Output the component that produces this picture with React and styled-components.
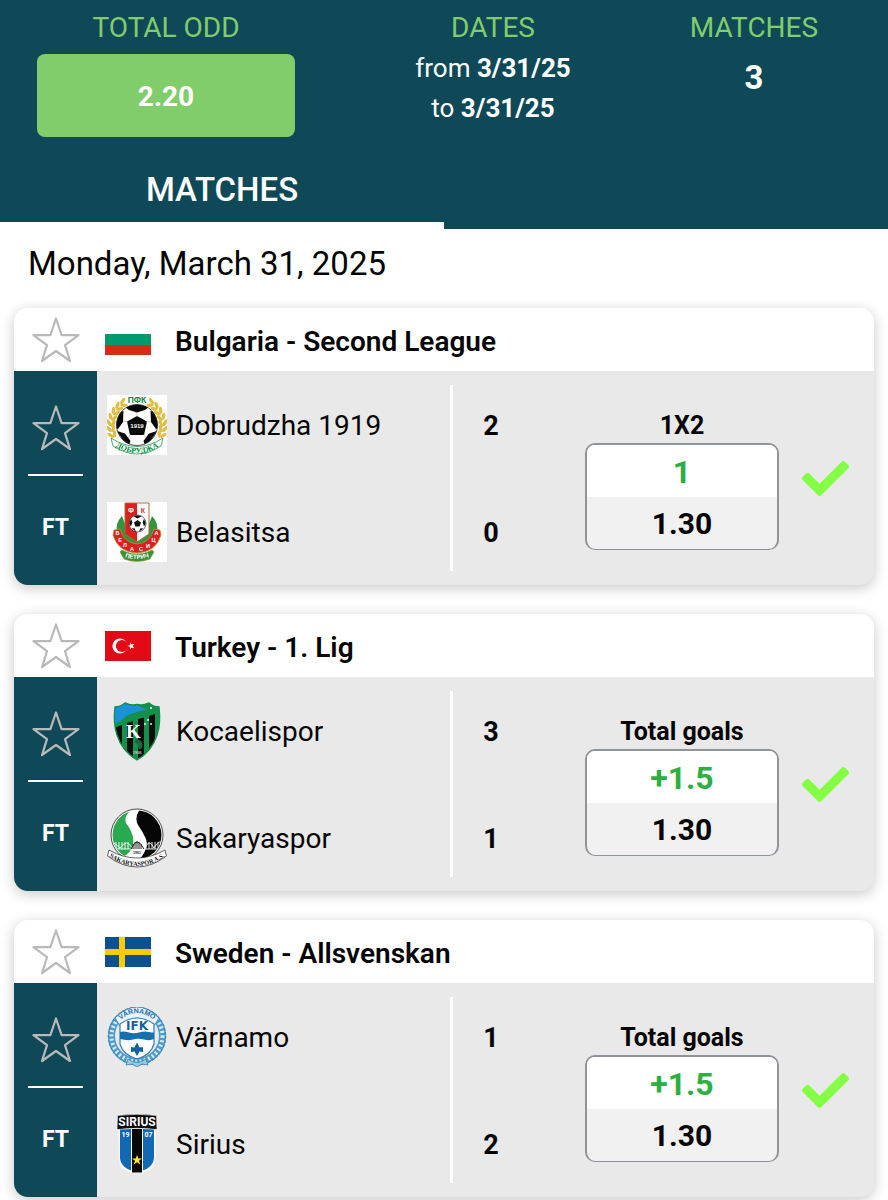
import React from "react";
import styled, { createGlobalStyle } from "styled-components";
import { FaCheck } from "react-icons/fa";

const teal = "#0f4957";
const lime = "#81cc6b";

const GlobalStyle = createGlobalStyle`
  *, *::before, *::after { box-sizing: border-box; }
  body {
    margin: 0;
    background: #fff;
    color: #050505;
    font-family: Roboto, "Liberation Sans", sans-serif;
  }
  button { font: inherit; color: inherit; border: 0; padding: 0; background: none; cursor: pointer; }
  h1, h2, h3, p, dl, dd { margin: 0; font-weight: 400; }
`;

/* ---------- header ---------- */

const Header = styled.header`
  background: ${teal};
  color: #fff;
`;

const Summary = styled.dl`
  display: grid;
  grid-template-columns: 332fr 322fr 200fr;
  padding: 10px 34px 0 0;
  min-height: 150px;
  text-align: center;
`;

const SummaryLabel = styled.dt`
  color: ${lime};
  font-size: 28px;
  line-height: 36px;
`;

const TotalOdd = styled.dd`
  height: 83px;
  margin: 8px 37px 0;
  border-radius: 8px;
  background: ${lime};
  font-size: 28px;
  line-height: 86px;
  font-weight: 700;
`;

const Dates = styled.div`
  padding-top: 2px;
`;

const DateLine = styled.dd`
  font-size: 26px;
  line-height: 40px;

  strong { font-weight: 700; }
`;

const MatchCount = styled.dd`
  padding-top: 12px;
  font-size: 33px;
  line-height: 40px;
  font-weight: 700;
`;

const Tabs = styled.nav`
  display: flex;
`;

const Tab = styled.button`
  flex: 1;
  height: 79px;
  padding-top: 8px;
  border-bottom: 7px solid ${(p) => (p.$active ? "#fff" : "transparent")};
  font-size: 33px;
  font-weight: 500;
  line-height: 40px;
`;

/* ---------- match list ---------- */

const Main = styled.main`
  padding: 15px 14px 28px;
`;

const DayTitle = styled.h1`
  padding: 0 14px;
  font-size: 33px;
  line-height: 40px;
`;

const CardList = styled.div`
  display: flex;
  flex-direction: column;
  gap: 29px;
  margin-top: 24px;
`;

const Card = styled.article`
  border-radius: 14px;
  overflow: hidden;
  background: #e9e9e9;
  box-shadow: 0 3px 14px rgba(0, 0, 0, 0.22);
`;

const LeagueBar = styled.header`
  display: flex;
  align-items: center;
  height: 63px;
  padding-top: 1px;
  background: #fff;
`;

const StarButton = styled.button`
  display: flex;
  justify-content: center;
  width: 83px;
  color: #b9b9b9;
`;

const FlagBox = styled.div`
  display: flex;
  width: 78px;
  padding-left: 8px;
`;

const LeagueName = styled.h2`
  font-size: 28px;
  line-height: 36px;
  font-weight: 600;
  padding-top: 4px;
`;

const MatchBody = styled.div`
  display: grid;
  grid-template-columns: 83px 353fr 3px 76px 345fr;
`;

const StatusColumn = styled.div`
  display: flex;
  flex-direction: column;
  align-items: center;
  padding-top: 33px;
  background: ${teal};
  color: #fff;
`;

const StatusRule = styled.hr`
  width: 55px;
  height: 2px;
  margin: 22px 0 36px;
  border: 0;
  background: #fff;
`;

const Status = styled.span`
  font-size: 23px;
  line-height: 32px;
  font-weight: 700;
`;

const Rows = styled.div`
  display: flex;
  flex-direction: column;
`;

const TeamRow = styled.div`
  display: flex;
  align-items: center;
  gap: 9px;
  height: 107px;
  padding-left: 10px;
`;

const TeamName = styled.h3`
  padding-top: 2px;
  font-size: 28px;
  line-height: 36px;
`;

const Divider = styled.div`
  margin: 14px 0;
  background: #fff;
`;

const Score = styled.span`
  height: 107px;
  line-height: 110px;
  text-align: center;
  font-size: 27px;
  font-weight: 700;
`;

const BetColumn = styled.div`
  display: flex;
  align-items: center;
  gap: 23px;
  padding: 0 25px 0 56px;
`;

const Market = styled.div`
  flex: 1;
  padding-top: 4px;
  text-align: center;
`;

const MarketName = styled.p`
  margin-bottom: 2px;
  font-size: 25px;
  line-height: 30px;
  font-weight: 700;
`;

const OddsBox = styled.div`
  border: 2px solid #8f949b;
  border-bottom-width: 1px;
  border-radius: 10px;
  overflow: hidden;
  background: #f1f1f2;
`;

const Pick = styled.p`
  padding-top: 2px;
  background: #fff;
  color: #2eae43;
  font-size: 32px;
  line-height: 50px;
  font-weight: 700;
`;

const Odd = styled.p`
  padding-top: 2px;
  font-size: 30px;
  line-height: 50px;
  font-weight: 700;
`;

const WonMark = styled(FaCheck)`
  width: 47px;
  height: 47px;
  color: #84ff45;
`;

/* ---------- drawings ---------- */

function Star() {
  return (
    <svg width="48" height="48" viewBox="0 0 48 48" fill="none" stroke="currentColor" strokeWidth="2.2" strokeLinejoin="round" aria-hidden="true">
      <path d="M24 2.5 L29.6 19.2 H46.5 L33 29.2 L38 45 L24 35 L10 45 L15 29.2 L1.5 19.2 H18.4 Z" />
    </svg>
  );
}

function BulgariaFlag() {
  return (
    <svg width="46" height="30" viewBox="0 0 46 30" role="img" aria-label="Bulgaria">
      <rect width="46" height="30" fill="#fff" />
      <rect y="4" width="46" height="11" fill="#fff" />
      <rect y="9" width="46" height="11" fill="#009a6e" />
      <rect y="20" width="46" height="10" fill="#d62b16" />
    </svg>
  );
}

function TurkeyFlag() {
  return (
    <svg width="46" height="30" viewBox="0 0 46 30" role="img" aria-label="Turkey">
      <rect width="46" height="30" fill="#e30a17" />
      <circle cx="15" cy="15" r="7.6" fill="#fff" />
      <circle cx="17" cy="15" r="6.1" fill="#e30a17" />
      <path d="M22.4 15 L25 14.2 L25 11.4 L26.6 13.6 L29.4 12.8 L27.7 15 L29.4 17.2 L26.6 16.4 L25 18.6 L25 15.8 Z" fill="#fff" />
    </svg>
  );
}

function SwedenFlag() {
  return (
    <svg width="46" height="30" viewBox="0 0 46 30" role="img" aria-label="Sweden">
      <rect width="46" height="30" fill="#0b5190" />
      <path d="M14 0 h6 v12 h26 v6 h-26 v12 h-6 v-12 h-14 v-6 h14 z" fill="#fecb00" />
    </svg>
  );
}

const Crest = styled.svg.attrs({ width: 60, height: 60, viewBox: "0 0 60 60", role: "img" })`
  flex: none;
  font-family: "Liberation Serif", serif;
  font-weight: 700;
  text-anchor: middle;
`;

function DobrudzhaCrest() {
  const branch = [
    [4.5, 39, -30],
    [3.2, 33, -15],
    [3.4, 27, 0],
    [5, 21, 15],
    [8, 15.5, 32],
    [12, 10.8, 48],
    [17, 7, 62],
  ].map(([x, y, turn]) => (
    <g key={y} transform={`translate(${x} ${y}) rotate(${turn})`}>
      <ellipse cx="-1.6" cy="0" rx="1.7" ry="3.7" transform="rotate(-28)" />
      <ellipse cx="3.2" cy="0" rx="1.7" ry="3.7" transform="rotate(28)" />
    </g>
  ));
  return (
    <Crest aria-label="Dobrudzha 1919">
      <defs>
        <path id="dob-arc" d="M5 49.5 Q30 67 55 49.5" />
        <clipPath id="dob-ball"><circle cx="30" cy="30" r="20.5" /></clipPath>
      </defs>
      <rect width="60" height="60" fill="#fff" />
      <g fill="#e0bd45">{branch}</g>
      <g fill="#e0bd45" transform="translate(60 0) scale(-1 1)">{branch}</g>
      <circle cx="30" cy="30" r="20.5" fill="#fff" stroke="#222" strokeWidth="0.8" />
      <g clipPath="url(#dob-ball)" fill="#080808">
        <path d="M30 21 L40 26.5 L37 40 H23 L20 26.5 Z" />
        <path d="M18 12 Q30 7 42 12 L38 15 L30 17.5 L22 15 Z" />
        <path d="M8 33 L9 18 L16.5 16 L16 27 L11 34 Z" />
        <path d="M52 33 L51 18 L43.5 16 L44 27 L49 34 Z" />
        <path d="M10 36 L18 38.5 L23.5 46 L21 53 Z" />
        <path d="M50 36 L42 38.5 L36.5 46 L39 53 Z" />
        <path d="M30 22 V17 M39 27 L44 26 M36.5 39 L39 43 M23.5 39 L21 43 M21 27 L16 26" stroke="#999" strokeWidth="0.5" />
      </g>
      <text x="30" y="33" fontSize="6" fill="#fff" fontFamily="Liberation Sans">1919</text>
      <text x="30" y="7.6" fontSize="8.5" fill="#0b8a43" fontFamily="Liberation Sans">ПФК</text>
      <path d="M4 43 Q30 60 56 43 L54 51 Q30 67 6 51 Z" fill="#fff" stroke="#35a365" strokeWidth="0.9" />
      <text fontSize="8" fill="#0b8a43"><textPath href="#dob-arc" startOffset="50%">ДОБРУДЖА</textPath></text>
    </Crest>
  );
}

function BelasitsaCrest() {
  return (
    <Crest aria-label="Belasitsa">
      <defs><path id="bel-foot" d="M16 54.5 Q30 59.5 44 54.5" /></defs>
      <rect width="60" height="60" fill="#fff" />
      <path d="M15 14 Q8 21 10 31 L20 44 H40 L50 31 Q52 21 45 14 L42 22 H18 Z" fill="#35923e" />
      <path d="M7 28 L13 27 Q17 41 30 42 Q43 41 47 27 L53 28 L54 33 Q49 50 30 51 Q11 50 6 33 Z" fill="#dc2020" stroke="#a69b39" strokeWidth="0.8" />
      <path d="M18 1 H30 V40 L18 32 Z" fill="#dc2020" />
      <path d="M30 1 H42 V32 L30 40 Z" fill="#fff" />
      <path d="M18 1 H42 V32 L30 40 L18 32 Z" fill="none" stroke="#a27036" strokeWidth="1" />
      <path d="M15 48 Q30 56 45 48 L47 50 L43 57 Q30 62 17 57 L13 50 Z" fill="#35923e" stroke="#a69b39" strokeWidth="0.7" />
      <circle cx="30.5" cy="21.5" r="8.5" fill="#fff" stroke="#222" strokeWidth="0.7" />
      <path d="M30.5 18 L34 20.5 L32.6 24.5 H28.4 L27 20.5 Z M26.5 14.6 L30.5 13.2 L34.5 14.6 L30.5 16.4 Z M22.2 21.5 L24 17 L25.4 20 L24 24.5 Z M38.8 21.5 L37 17 L35.6 20 L37 24.5 Z M24.5 26.5 L27.6 26.3 L29 29.8 Z M36.5 26.5 L33.4 26.3 L32 29.8 Z" fill="#111" />
      <g fontFamily="Liberation Sans" fontSize="7">
        <text x="24" y="10.5" fill="#fff">Ф</text>
        <text x="36" y="10.5" fill="#dc2020">К</text>
        <g fill="#fff" fontSize="5.5">
          <text x="10.5" y="33">Б</text>
          <text x="13" y="39.5">Е</text>
          <text x="18" y="45">Л</text>
          <text x="25" y="48.5">А</text>
          <text x="34" y="48.5">С</text>
          <text x="41" y="45.5">И</text>
          <text x="46.5" y="40">Ц</text>
          <text x="49.5" y="33">А</text>
        </g>
        <text fontSize="6" fill="#fff"><textPath href="#bel-foot" startOffset="50%">ПЕТРИЧ</textPath></text>
      </g>
    </Crest>
  );
}

function KocaelisporCrest() {
  const shield = "M8 6 Q13 6 18 2 Q24 5 30 3.5 Q36 5 42 2 Q47 6 52 6 Q54 22 50 34 Q45 50 30 59 Q15 50 10 34 Q6 22 8 6 Z";
  return (
    <Crest aria-label="Kocaelispor">
      <defs><clipPath id="koc-shield"><path d={shield} /></clipPath></defs>
      <g clipPath="url(#koc-shield)">
        <rect width="60" height="60" fill="#14904b" />
        <path d="M6 5 L18 0 L30 4 L40 9 Q33 9 27 12 Q20 13 15 19 L6 24 Z" fill="#1b91d8" />
        <g fill="#090d0b">
          <path d="M7 27 L15 24 V60 H7 Z" />
          <path d="M20 22 L26 20 V60 H20 Z" />
          <path d="M31 18 L37 16.5 V60 H31 Z" />
          <path d="M42 15 L48 13 V60 H42 Z" />
        </g>
      </g>
      <path d={shield} fill="none" stroke="#14904b" strokeWidth="1.4" />
      <text x="26.5" y="37" fontSize="19" fill="#fff">K</text>
      <g fill="#fff">
        <circle cx="44" cy="7" r="1" />
        <circle cx="41" cy="19" r="0.9" />
        <circle cx="38" cy="23" r="0.9" />
        <circle cx="44" cy="23" r="0.9" />
      </g>
      <path d="M27 40 q4 -3 7 0 q3 4 0 8 q-4 0 -3 -4 z" fill="#23633f" />
      <text x="30" y="53" fontSize="4.6" fill="#b7d9c4">1966</text>
    </Crest>
  );
}

function SakaryasporCrest() {
  const piers = [6, 9, 12, 15, 18, 21, 39, 42, 45, 48, 51, 54];
  return (
    <Crest aria-label="Sakaryaspor">
      <defs>
        <path id="sak-arc" d="M2 48.5 Q30 67.5 58 48.5" />
        <clipPath id="sak-disc"><circle cx="30" cy="27" r="24.5" /></clipPath>
      </defs>
      <circle cx="30" cy="27" r="26" fill="#fff" stroke="#222" strokeWidth="0.8" />
      <g clipPath="url(#sak-disc)">
        <path d="M0 0 H28 Q16 6 19 15 Q28 27 26 36 Q24 46 15 49 L0 44 Z" fill="#2aaa50" />
        <path d="M33 1 Q27 10 31 17 Q36 24 39 31 Q42 41 31 53 H60 V0 Z" fill="#060606" />
        <g fill="none" stroke="#fff" strokeWidth="0.9">
          <path d="M4 41 H25 M37 41 H56" />
          <path d="M4 33 Q10 37 13 40 Q20 30 25 40 M38 40 Q42 30 47 40 Q51 33 56 33" />
          {piers.map((x) => <path key={x} d={`M${x} 34 V41`} />)}
        </g>
        <path d="M24 41 Q30 27 37 41 M26 36 V41 M28 34 V41 M30 33 V41 M32 34 V41 M34 36 V41" fill="none" stroke="#111" strokeWidth="0.9" />
      </g>
      <path d="M2 42 Q30 58 58 42 L59.5 48 Q30 70 0.5 48 Z" fill="#fff" stroke="#222" strokeWidth="0.7" />
      <text x="30" y="45.5" fontSize="4" fill="#111">1965</text>
      <text fontSize="6.3" fill="#111"><textPath href="#sak-arc" startOffset="50%">SAKARYASPOR A.S.</textPath></text>
    </Crest>
  );
}

function VarnamoCrest() {
  return (
    <Crest aria-label="Värnamo">
      <defs><path id="var-arc" d="M8 18 Q30 -5.5 52 18" /></defs>
      <circle cx="30" cy="29" r="25.5" fill="none" stroke="#4f9ccb" strokeWidth="7" />
      <circle cx="30" cy="29" r="25.5" fill="none" stroke="#d6e9f4" strokeWidth="4" strokeDasharray="2 2.4" />
      <circle cx="30" cy="29" r="28.7" fill="none" stroke="#2f7fb5" strokeWidth="1" strokeDasharray="3 1.4" />
      <path d="M8 11 Q30 -11 52 11 L47 19 Q30 3 13 19 Z" fill="#e9f3f9" stroke="#2f7fb5" strokeWidth="0.8" />
      <path d="M21 52 Q30 59 39 52 L41 58 L35 57 L30 60 L25 57 L19 58 Z" fill="#9cc8e2" stroke="#2f7fb5" strokeWidth="0.8" />
      <path d="M13 17 Q30 5 47 17 V37 Q44 48 30 52 Q16 48 13 37 Z" fill="#fff" stroke="#2f7fb5" strokeWidth="1.2" />
      <text fontSize="7" fill="#1c6ca8" fontFamily="Liberation Sans"><textPath href="#var-arc" startOffset="50%">VÄRNAMO</textPath></text>
      <text x="30" y="22.5" fontSize="12" fill="#10639f" fontFamily="DejaVu Sans">IFK</text>
      <path d="M13 25 Q17 24 22 25.5 T32 25.5 T42 25 T47 25 V32 Q43 34 37 32.5 T26 32.5 T13 32 Z" fill="#1670ad" />
      <path d="M30 35.5 L32.6 40.4 L36 40 L36 45 L32.6 44.6 L30 49 L27.4 44.6 L24 45 L24 40 L27.4 40.4 Z" fill="#10639f" />
    </Crest>
  );
}

function SiriusCrest() {
  return (
    <Crest aria-label="Sirius">
      <path d="M11.5 14 H48.5 V44 Q48 59 30 59.5 Q12 59 11.5 44 Z" fill="#f6f8fa" />
      <path d="M13 15 H47 V44 Q46 55 30 58 Q14 55 13 44 Z" fill="#1169b4" />
      <rect x="24" y="15" width="12" height="43.5" fill="#fff" />
      <rect x="25" y="15" width="10" height="43.5" fill="#080808" />
      <path d="M10.5 1.5 Q30 -1 49.5 1.5 L50 15.5 Q30 13 10 15.5 Z" fill="#080808" stroke="#fff" strokeWidth="0.6" />
      <g fontFamily="Roboto">
        <text x="30" y="12" fontSize="12" fill="#fff">SIRIUS</text>
        <text x="18.5" y="23" fontSize="7" fill="#fff">19</text>
        <text x="41.5" y="23" fontSize="7" fill="#fff">07</text>
      </g>
      <path d="M30 41 L31.3 44.5 H35 L32 46.7 L33.2 50.5 L30 48.2 L26.8 50.5 L28 46.7 L25 44.5 H28.7 Z" fill="#ffe62e" />
    </Crest>
  );
}

/* ---------- data ---------- */

const matches = [
  {
    league: "Bulgaria - Second League",
    Flag: BulgariaFlag,
    teams: [
      { name: "Dobrudzha 1919", score: 2, Logo: DobrudzhaCrest },
      { name: "Belasitsa", score: 0, Logo: BelasitsaCrest },
    ],
    market: "1X2",
    pick: "1",
    odd: "1.30",
  },
  {
    league: "Turkey - 1. Lig",
    Flag: TurkeyFlag,
    teams: [
      { name: "Kocaelispor", score: 3, Logo: KocaelisporCrest },
      { name: "Sakaryaspor", score: 1, Logo: SakaryasporCrest },
    ],
    market: "Total goals",
    pick: "+1.5",
    odd: "1.30",
  },
  {
    league: "Sweden - Allsvenskan",
    Flag: SwedenFlag,
    teams: [
      { name: "Värnamo", score: 1, Logo: VarnamoCrest },
      { name: "Sirius", score: 2, Logo: SiriusCrest },
    ],
    market: "Total goals",
    pick: "+1.5",
    odd: "1.30",
  },
];

function MatchCard({ match }) {
  const { Flag } = match;
  return (
    <Card>
      <LeagueBar>
        <StarButton type="button" aria-label="Favourite league"><Star /></StarButton>
        <FlagBox><Flag /></FlagBox>
        <LeagueName>{match.league}</LeagueName>
      </LeagueBar>
      <MatchBody>
        <StatusColumn>
          <StarButton type="button" aria-label="Favourite match"><Star /></StarButton>
          <StatusRule />
          <Status>FT</Status>
        </StatusColumn>
        <Rows>
          {match.teams.map(({ name, Logo }) => (
            <TeamRow key={name}>
              <Logo />
              <TeamName>{name}</TeamName>
            </TeamRow>
          ))}
        </Rows>
        <Divider />
        <Rows>
          {match.teams.map(({ name, score }) => <Score key={name}>{score}</Score>)}
        </Rows>
        <BetColumn>
          <Market>
            <MarketName>{match.market}</MarketName>
            <OddsBox>
              <Pick>{match.pick}</Pick>
              <Odd>{match.odd}</Odd>
            </OddsBox>
          </Market>
          <WonMark aria-label="Won" />
        </BetColumn>
      </MatchBody>
    </Card>
  );
}

export default function App() {
  return (
    <>
      <GlobalStyle />
      <Header>
        <Summary>
          <div>
            <SummaryLabel>TOTAL ODD</SummaryLabel>
            <TotalOdd>2.20</TotalOdd>
          </div>
          <div>
            <SummaryLabel>DATES</SummaryLabel>
            <Dates>
              <DateLine>from <strong>3/31/25</strong></DateLine>
              <DateLine>to <strong>3/31/25</strong></DateLine>
            </Dates>
          </div>
          <div>
            <SummaryLabel>MATCHES</SummaryLabel>
            <MatchCount>3</MatchCount>
          </div>
        </Summary>
        <Tabs>
          <Tab type="button" $active>MATCHES</Tab>
          <Tab type="button" aria-label="Details" />
        </Tabs>
      </Header>
      <Main>
        <DayTitle>Monday, March 31, 2025</DayTitle>
        <CardList>
          {matches.map((m) => <MatchCard key={m.league} match={m} />)}
        </CardList>
      </Main>
    </>
  );
}
